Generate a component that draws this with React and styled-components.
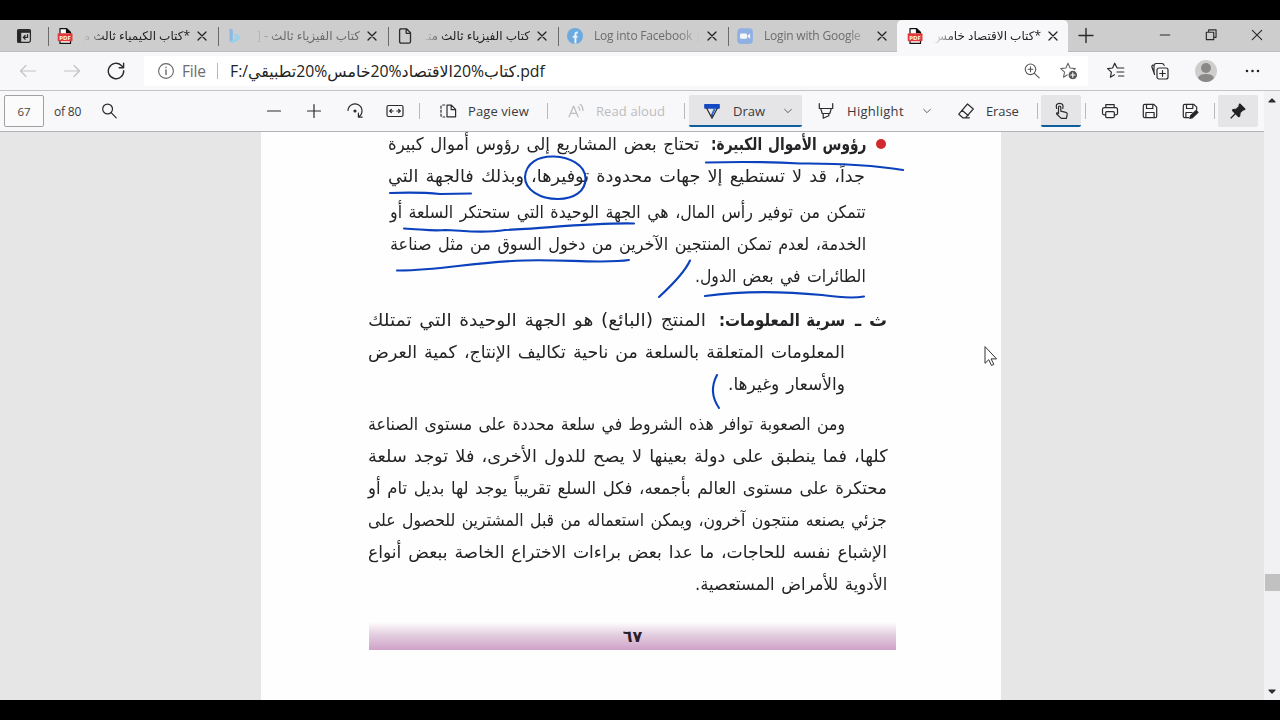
import { useLayoutEffect, useRef, useState } from 'react';
import styled, { createGlobalStyle, css } from 'styled-components';

const GlobalStyle = createGlobalStyle`
  * {
    box-sizing: border-box;
  }
  body {
    margin: 0;
    background: #000;
    overflow: hidden;
    font-family: "Open Sans", "Noto Sans", "DejaVu Sans", sans-serif;
  }
`;

const Screen = styled.div`
  display: flex;
  flex-direction: column;
  width: 1280px;
  height: 720px;
  padding: 20px 0;
  background: #000;
  overflow: hidden;
`;

/* ---------- tab strip ---------- */
const TabStrip = styled.header`
  display: flex;
  height: 32px;
  background: #cdcdcd;
  border-bottom: 1px solid #bdbdbd;
`;
const TabMenu = styled.div`
  display: flex;
  align-items: center;
  width: 47px;
  padding-left: 16px;
`;
const Tab = styled.div`
  display: flex;
  align-items: center;
  width: 170px;
  height: 32px;
  padding: 0 9px 0 8px;
  border-left: 1px solid transparent;
  ${(props) => !props.$active && css`
    background: linear-gradient(#6a6a6a, #6a6a6a) 0 7px / 1px 19px no-repeat;
  `}
  ${(props) => props.$active && css`
    width: 171px;
    background: #f8f8fa;
    border-radius: 5px 5px 0 0;
  `}
`;
const TabTitle = styled.span`
  flex: 1;
  height: 20px;
  margin: 0 6px 0 10px;
  overflow: hidden;
  white-space: nowrap;
  font-size: 12px;
  line-height: 20px;
  letter-spacing: ${(props) => (props.dir === 'rtl' ? 0 : '-0.2px')};
  color: ${(props) => (props.$dim ? '#6c6c6c' : '#222')};
  mask-image: linear-gradient(
    ${(props) => (props.dir === 'rtl' ? 'to left' : 'to right')},
    #000 calc(100% - 22px), transparent
  );
`;
const WindowButtons = styled.div`
  display: flex;
  flex: 1;
  align-items: center;
  padding: 0 14px 2px 8px;
`;

/* ---------- address bar ---------- */
const NavBar = styled.nav`
  display: flex;
  align-items: center;
  height: 39px;
  background: #f8f8fa;
  border-bottom: 1px solid #c3c3c5;
`;
const AddressBox = styled.div`
  display: flex;
  align-items: center;
  width: 944px;
  height: 30px;
  margin-left: 19px;
  padding: 0 10px 0 13px;
  background: #fff;
  font-size: 15.8px;
`;
const Scheme = styled.span`
  width: 35px;
  margin-left: 7px;
  color: #6d6d6d;
  font-size: 15.5px;
  letter-spacing: -0.2px;
`;
const Url = styled.span`
  flex: 1;
  padding-left: 12px;
  color: #222;
  white-space: nowrap;
`;
const Avatar = styled.svg`
  width: 22px;
  height: 22px;
  margin-left: 26px;
`;

/* ---------- pdf toolbar ---------- */
const Viewer = styled.section`
  display: flex;
  flex: 1;
  min-height: 0;
`;
const ViewerMain = styled.div`
  display: flex;
  flex-direction: column;
  width: 1264px;
`;
const Toolbar = styled.div`
  display: flex;
  align-items: center;
  height: 41px;
  padding-left: 4px;
  background: #f8f8fa;
  border-bottom: 1px solid #b4b4b7;
  font-size: 13px;
  color: #333;
`;
const PageInput = styled.div`
  width: 40px;
  height: 32px;
  border: 1px solid #a0a0a3;
  border-radius: 2px;
  background: #fbfbfc;
  text-align: center;
  font-size: 11.5px;
  line-height: 31px;
  color: #444;
`;
const ToolLabel = styled.span`
  width: ${(props) => props.$w}px;
  margin-left: ${(props) => props.$ml}px;
  white-space: nowrap;
  font-size: ${(props) => props.$size || 13}px;
  letter-spacing: ${(props) => props.$ls || 0}px;
  color: ${(props) => (props.$off ? '#bcbcbe' : '#3a3a3a')};
`;
const Divider = styled.i`
  width: 1px;
  height: ${(props) => props.$h || 16}px;
  margin-left: ${(props) => props.$ml || 0}px;
  background: #b9b9bc;
`;
const ToolButton = styled.div`
  display: flex;
  align-items: center;
  width: ${(props) => props.$w}px;
  height: 32px;
  margin-left: ${(props) => props.$ml}px;
  padding-top: 2px;
  padding-left: ${(props) => props.$pl}px;
  background: #e5e5e7;
  border-bottom: 2px solid ${(props) => (props.$selected ? '#0c5e9c' : 'transparent')};
  border-radius: 2px;
`;
const Svg = styled.svg`
  flex: none;
  display: block;
  margin-left: ${(props) => props.$ml || 0}px;
  fill: none;
  stroke: ${(props) => props.$c || '#2b2b2b'};
  stroke-width: ${(props) => props.$sw || 1.2};
  stroke-linecap: round;
  stroke-linejoin: round;
`;

/* ---------- document ---------- */
const Canvas = styled.main`
  display: flex;
  flex: 1;
  min-height: 0;
  padding-left: 261px;
  background: #e6e6e6;
  overflow: hidden;
`;
const Page = styled.article`
  position: relative;
  width: 740px;
  padding-top: 0;
  background: #fefefe;
`;
const Line = styled.div`
  display: flex;
  direction: rtl;
  height: ${(props) => props.$h || 32}px;
  padding-right: ${(props) => props.$right}px;
  align-items: flex-end;
  margin-top: ${(props) => props.$mt || 0}px;
`;
const Bullet = styled.i`
  width: 10px;
  height: 10px;
  margin: 0 0 12px 10px;
  border-radius: 50%;
  background: #d22a2c;
`;
const Slot = styled.div`
  width: ${(props) => props.$w}px;
  margin-left: ${(props) => props.$gap || 0}px;
  height: 32px;
`;
const Words = styled.span`
  display: inline-block;
  white-space: nowrap;
  transform-origin: right center;
  font-family: "DejaVu Sans", sans-serif;
  font-size: 17.5px;
  line-height: 31px;
  word-spacing: 1.5px;
  font-weight: ${(props) => (props.$bold ? 700 : 400)};
  color: #242426;
`;
const PageFooter = styled.footer`
  width: 527px;
  height: 28px;
  margin: 21px 0 0 108px;
  background: linear-gradient(#fefefe, #e4cfe0 45%, #cfa2c8);
  text-align: center;
  font: bold 16px/30px "DejaVu Sans", sans-serif;
  letter-spacing: 1px;
  color: #2b1f2b;
`;
const Ink = styled.svg`
  position: absolute;
  left: 0;
  top: 0;
  fill: none;
  stroke: #0b41bd;
  stroke-width: 2.1;
  stroke-linecap: round;
`;

const ScrollBar = styled.aside`
  display: flex;
  flex-direction: column;
  align-items: center;
  width: 16px;
  background: #f1f0f3;
`;
const Thumb = styled.div`
  flex: none;
  width: 15px;
  height: 17px;
  margin: 465px 0 91px;
  background: #c1c1c1;
`;

// printed words are set tight: stretch or squeeze each run to its measure
const Run = ({ w, gap, bold, children }) => {
    const ref = useRef(null);
    const [scale, setScale] = useState(1);
    useLayoutEffect(() => {
        setScale(w / ref.current.offsetWidth);
    }, [w]);
    return (
        <Slot $w={w} $gap={gap}>
            <Words ref={ref} $bold={bold} style={{ transform: `scaleX(${scale})` }}>{children}</Words>
        </Slot>
    );
};

const Icon = ({ size = 18, ml, c, sw, children }) => (
    <Svg width={size} height={size} viewBox="0 0 18 18" $ml={ml} $c={c} $sw={sw}>{children}</Svg>
);

const PdfIcon = () => (
    <Icon>
        <path d="M4 7V1.6h6.5L14.5 5.5V16.4H4V14" fill="#fff" stroke="#111" />
        <path d="M10.5 1.6v4h4z" fill="#111" stroke="#111" />
        <rect x="1.7" y="6.2" width="14.8" height="8" rx="1" fill="#e03a3c" stroke="none" />
        <text x="9.1" y="12.5" fontSize="6" fontWeight="700" textAnchor="middle" fill="#fff" stroke="none">PDF</text>
    </Icon>
);
const BingIcon = () => (
    <Icon>
        <path d="M3.6 1.5 6.8 2.6v11L3.6 15z" fill="#8bb9e3" stroke="none" />
        <path d="M7.8 6l6 2.7v3.6L6.8 16.3 3.6 14.8l5.8-3.4z" fill="#9bd0ea" stroke="none" />
    </Icon>
);
const FileIcon = () => (
    <Icon sw={1.3}>
        <path d="M4.2 1.8h6.3l4 4v8.8q0 1.6-1.6 1.6H5.2q-1.6 0-1.6-1.6V3.4q0-1.6 1.6-1.6M10.2 2v4.3h4.2" />
    </Icon>
);
const FacebookIcon = () => (
    <Icon>
        <circle cx="9" cy="9" r="8" fill="#6ba9df" stroke="none" />
        <path d="M9.4 16.5V7.4q0-2.2 2.5-1.9M6.7 9.8h4.8" stroke="#e8f1f8" strokeWidth="2" strokeLinecap="butt" />
    </Icon>
);
const ZoomIcon = () => (
    <Icon>
        <rect x="1.3" y="1.3" width="15.6" height="15.6" rx="4" fill="#8fb0e2" stroke="none" />
        <rect x="4" y="6.4" width="7" height="5.4" rx="1.3" fill="#f3f6fb" stroke="none" />
        <path d="M11.7 8.3l2.4-1.6v4.8l-2.4-1.6z" fill="#f3f6fb" stroke="none" />
    </Icon>
);
const CloseIcon = () => (
    <Icon size={12} c="#222" sw={1.9}>
        <path d="M3 3l12 12M15 3L3 15" />
    </Icon>
);
const Chevron = ({ ml }) => (
    <Icon size={10} ml={ml} c="#555" sw={1.7}><path d="M3 6l6 6 6-6" /></Icon>
);
const StarPath = 'M8 1.2l2.1 4.8 5.2.6-3.9 3.5 1.1 5.1L8 12.6l-4.5 2.6 1.1-5.1L.7 6.600 5.900 6z';

const tabs = [
    { icon: <PdfIcon />, title: '*كتاب الكيمياء ثالث م', rtl: true },
    { icon: <BingIcon />, title: 'كتاب الفيزياء ثالث - [', rtl: true, dim: true },
    { icon: <FileIcon />, title: 'كتاب الفيزياء ثالث متـ', rtl: true },
    { icon: <FacebookIcon />, title: 'Log into Facebook |', dim: true },
    { icon: <ZoomIcon />, title: 'Login with Google', dim: true },
    { icon: <PdfIcon />, title: '*كتاب الاقتصاد خامس', rtl: true, active: true },
];

const Tabs = () => (
    <TabStrip>
        <TabMenu>
            <Icon size={16} sw={1.4}>
                <rect x="1.8" y="1.8" width="14.4" height="14.4" rx="2" />
                <path d="M2 2.5h14v2.2H5.2V16H2z" fill="#222" />
                <path d="M13 7.5v3H8.5M10.3 8.4L8.2 10.5l2.1 2.1" />
            </Icon>
        </TabMenu>
        {tabs.map((tab, i) => (
            <Tab key={i} $active={tab.active}>
                {tab.icon}
                <TabTitle dir={tab.rtl ? 'rtl' : 'ltr'} $dim={tab.dim}>{tab.title}</TabTitle>
                <CloseIcon />
            </Tab>
        ))}
        <WindowButtons>
            <Icon ml={1} sw={1.4}><path d="M2 9.5h14M9 2.5v14" /></Icon>
            <Icon size={14} ml={63} sw={1.5}><path d="M3 9h12" /></Icon>
            <Icon size={14} ml={32} sw={1.5}><path d="M3 5.5h9.5V15H3zM6 5V2.5h9.5V12H13" /></Icon>
            <Icon size={14} ml={32} sw={1.5}><path d="M3 3l12 12M15 3L3 15" /></Icon>
        </WindowButtons>
    </TabStrip>
);

const Navigation = () => (
    <NavBar>
        <Icon ml={19} c="#c2c2c5"><path d="M1.500 9h15M7 3.500L1.500 9 7 14.500" /></Icon>
        <Icon ml={26} c="#c2c2c5"><path d="M1.500 9h15M11 3.500L16.500 9 11 14.500" /></Icon>
        <Icon ml={26} sw={1.400}><path d="M16.700 8.800A7.700 7.700 0 1 1 14.300 3.400L16.200 5.500M16.600 1.300v4.400h-4.400" /></Icon>
        <AddressBox>
            <Icon c="#666" sw={1.1}>
                <circle cx="9" cy="9" r="7.4" />
                <path d="M9 8v4.6M9 5.3v.3" strokeWidth="1.4" />
            </Icon>
            <Scheme>File</Scheme>
            <Divider $ml={0} />
            <Url>F:/كتاب%20الاقتصاد%20خامس%20تطبيقي.pdf</Url>
            <Icon c="#555" sw={1.1}>
                <circle cx="7.5" cy="7.3" r="5.3" />
                <path d="M11.4 11.3l4.8 4.5M7.5 4.9v4.8M5.1 7.3h4.8" />
            </Icon>
            <Icon ml={19} c="#666" sw={1.1}>
                <path d={StarPath} />
                <circle cx="12.800" cy="13" r="4.8" fill="#555" stroke="#fff" />
                <path d="M12.800 10.800v4.400M10.600 13h4.400" stroke="#fff" />
            </Icon>
        </AddressBox>
        <Icon ml={19}>
            <path d="M9.800 5.600L7.700 1.200 5.600 6l-5 .6 3.800 3.500-1 5.100L7.500 12.800M10.500 6h6.300M10 10h6.800M11.500 14h5.300" />
        </Icon>
        <Icon ml={26}>
            <rect x="6" y="6" width="11" height="11" rx="2" />
            <path d="M11.500 8.700v5.600M8.700 11.500h5.600M3.600 12.500L1 5.200Q.5 3.700 1.900 3.100M3.600 12.500Q3 11 3 9V3.800Q3 1.500 5.200 1.500h5.600q2 0 2.400 2" />
        </Icon>
        <Avatar viewBox="0 0 22 22">
            <circle cx="11" cy="11" r="11" fill="#d0cecc" />
            <circle cx="11" cy="8" r="5" fill="#8b8988" />
            <path d="M3 18q1-4 8-4t8 4q-3 4-8 4t-8-4z" fill="#8b8988" />
        </Avatar>
        <Icon ml={26} c="#222">
            <path d="M4 9h.01M9.5 9h.01M15 9h.01" strokeWidth="2.6" />
        </Icon>
    </NavBar>
);

const Tools = () => (
    <Toolbar>
        <PageInput>67</PageInput>
        <ToolLabel $ml={10} $w={38} $size={12} $ls={-0.2}>of 80</ToolLabel>
        <Icon ml={8}><circle cx="7.6" cy="7" r="4.9" /><path d="M11.2 10.6l5 5.2" /></Icon>
        <Icon ml={147}><path d="M2.5 9h13" /></Icon>
        <Icon ml={22}><path d="M2.5 9h13M9 2.5v13" /></Icon>
        <Icon ml={23}>
            <path d="M2 8.500A7 7 0 1 1 13 14.600M12.400 11.200v3.900h3.800" />
            <circle cx="9" cy="9" r="1" fill="#222" />
        </Icon>
        <Icon ml={22}>
            <rect x="1" y="3.5" width="16" height="11" rx="1.5" />
            <path d="M3.8 9h3.4M10.8 9h3.4M5.4 7.3L3.7 9l1.7 1.7M12.6 7.3L14.3 9l-1.7 1.7" />
        </Icon>
        <Divider $ml={15} />
        <Icon ml={19}>
            <path d="M8 3.2h4.4l4.2 4.2v7.4H8zM12.2 3.4v4.2h4.2" />
            <path d="M5.7 3H3.4Q2 3 2 4.5v9Q2 15 3.4 15h2.3" strokeDasharray="2 2" />
        </Icon>
        <ToolLabel $ml={11} $w={79} $ls={0.1}>Page view</ToolLabel>
        <Divider />
        <Icon ml={19} c="#bcbcbe">
            <path d="M2 15L6.6 4l4.6 11M3.6 11.3h6M11 4.8q1.8 1.3 1.8 3.7M13.2 2.3q2.8 2.2 2.8 6.2" />
        </Icon>
        <ToolLabel $ml={11} $w={88} $ls={0.1} $off>Read aloud</ToolLabel>
        <Divider />
        <ToolButton $ml={4} $w={113} $pl={14} $selected>
            <Icon>
                <path d="M1.8 2.5h14.4v3.6H1.8z" fill="#1549c4" stroke="#1549c4" />
                <path d="M3.8 6.5L9 16.2l5.2-9.7M7.5 13.3l1.5 2.9 1.5-2.9z" />
                <path d="M11.6 7L9 12.6" stroke="#2a6bd0" strokeWidth="1.8" />
            </Icon>
            <ToolLabel $ml={12} $w={50}>Draw</ToolLabel>
            <Chevron ml={0} />
        </ToolButton>
        <Icon ml={15}>
            <path d="M2.3 1.500v5h13.400v-5M3.800 6.800l1.400 4.700h7.600l1.400-4.700M6.200 11.500v4.700l5.600-2.400v-2.300" />
        </Icon>
        <ToolLabel $ml={12} $w={75} $ls={0.3}>Highlight</ToolLabel>
        <Chevron ml={0} />
        <Icon ml={25}>
            <path d="M10.5 2l5.8 5L8.4 15.8H5.8L1.8 12.2zM5 8.2l6.2 5.3M8.4 15.8h4" />
        </Icon>
        <ToolLabel $ml={11} $w={51} $ls={-0.1}>Erase</ToolLabel>
        <Divider />
        <ToolButton $ml={3} $w={40} $pl={11} $selected>
            <Icon>
                <path d="M6.5 11V5.2q0-1.2 1.1-1.2t1.2 1.2v4l5 1.1q1.7.4 1.4 2.1l-.8 4H9.2L4.7 12q-.6-1 .4-1.2l1.4.8M4.6 6.5Q3.2 1.3 7.6 1.3t3.2 5.2" />
            </Icon>
        </ToolButton>
        <Divider $ml={4} />
        <Icon ml={15}>
            <path d="M4.8 5.5V2.6h8.4v2.900M4.500 12.800H3q-1.500 0-1.500-1.500V7.500Q1.500 5.600 3.400 5.600h11.200q1.900 0 1.900 1.900v3.800q0 1.500-1.500 1.500h-1.500" />
            <rect x="4.7" y="9.6" width="8.6" height="6" rx="1" />
        </Icon>
        <Icon ml={22}>
            <path d="M2.3 3.8q0-1.5 1.5-1.5h9l2.9 2.9v9q0 1.5-1.5 1.5H3.8q-1.500 0-1.500-1.500zM5.500 2.500v4h6.300v-4M4.900 15.500v-5h8.200v5" />
        </Icon>
        <Icon ml={22}>
            <path d="M7.6 15.7H3.8q-1.5 0-1.5-1.5V3.8q0-1.5 1.5-1.5h9l2.9 2.9v2.6M5.5 2.5v4h6.3v-4M4.9 15.5v-5h6.2" />
            <path d="M8.8 16.4l.8-2.8 5.5-5.2 1.9 1.9-5.4 5.3z" fill="#222" />
        </Icon>
        <Divider $ml={15} />
        <ToolButton $ml={3} $w={40} $pl={11}>
            <Icon>
                <path d="M10.8 2l5.2 5.1-1.3.8-1 .1-2.6 2.6-.5 3.6-1.1.4-5.9-6 .4-1.1 3.6-.5L10.2 4.4l-.1-1.3zM6 12L2 16" fill="#222" stroke="#222" />
            </Icon>
        </ToolButton>
    </Toolbar>
);

const Document = () => (
    <Page>
        <Line $h={29} $right={115}>
            <Bullet />
            <Run w={155} gap={12} bold>رؤوس الأموال الكبيرة:</Run>
            <Run w={311}>تحتاج بعض المشاريع إلى رؤوس أموال كبيرة</Run>
        </Line>
        <Line $right={136}><Run w={477}>جداً، قد لا تستطيع إلا جهات محدودة توفيرها، وبذلك فالجهة التي</Run></Line>
        <Line $right={135} $mt={4}><Run w={476}>تتمكن من توفير رأس المال، هي الجهة الوحيدة التي ستحتكر السلعة أو</Run></Line>
        <Line $right={135}><Run w={476}>الخدمة، لعدم تمكن المنتجين الآخرين من دخول السوق من مثل صناعة</Run></Line>
        <Line $right={135}><Run w={171}>الطائرات في بعض الدول.</Run></Line>
        <Line $right={114} $mt={12}>
            <Run w={32} gap={10} bold>ث ـ</Run>
            <Run w={126} gap={13} bold>سرية المعلومات:</Run>
            <Run w={338}>المنتج (البائع) هو الجهة الوحيدة التي تمتلك</Run>
        </Line>
        <Line $right={156}><Run w={477}>المعلومات المتعلقة بالسلعة من ناحية تكاليف الإنتاج، كمية العرض</Run></Line>
        <Line $right={156}><Run w={117}>والأسعار وغيرها.</Run></Line>
        <Line $right={156} $mt={8}><Run w={477}>ومن الصعوبة توافر هذه الشروط في سلعة محددة على مستوى الصناعة</Run></Line>
        <Line $right={113}><Run w={520}>كلها، فما ينطبق على دولة بعينها لا يصح للدول الأخرى، فلا توجد سلعة</Run></Line>
        <Line $right={114}><Run w={519}>محتكرة على مستوى العالم بأجمعه، فكل السلع تقريباً يوجد لها بديل تام أو</Run></Line>
        <Line $right={114}><Run w={519}>جزئي يصنعه منتجون آخرون، ويمكن استعماله من قبل المشترين للحصول على</Run></Line>
        <Line $right={114}><Run w={519}>الإشباع نفسه للحاجات، ما عدا بعض براءات الاختراع الخاصة ببعض أنواع</Run></Line>
        <Line $right={114}><Run w={192}>الأدوية للأمراض المستعصية.</Run></Line>
        <PageFooter>٦٧</PageFooter>
        <Ink width="740" height="568" viewBox="261 132 740 568">
            <path d="M706 162.5Q755 161 800 163.5Q860 163 903 170" />
            <path d="M554 156.5C538 156 526 163 525 177C525 190 540 199 558 199C574 199 586 191 585.5 178C585 165 570 157 554 156.5" />
            <path d="M390 193Q420 192 440 194L471 193.5" />
            <path d="M404 228.5C420 229 432 231.5 445 230C460 230 480 234 505 230C540 229 590 222.5 634 223.5" />
            <path d="M397 270.5C440 271 470 262 525 260.5C560 259 605 264 629 260" />
            <path d="M690 260.5Q684 274 659 297" />
            <path d="M705 296C740 291 780 291 822 295Q850 299 864 296.5" />
            <path d="M717 375Q708 392 719 408" />
            <path d="M985 347v16.3l3.8-3.6 2.7 5.8 2.3-1.1-2.7-5.5h5.1z" fill="#fff" stroke="#333" strokeWidth="1" />
        </Ink>
    </Page>
);

const App = () => {
    return (
        <>
            <GlobalStyle />
            <Screen>
                <Tabs />
                <Navigation />
                <Viewer>
                    <ViewerMain>
                        <Tools />
                        <Canvas><Document /></Canvas>
                    </ViewerMain>
                    <ScrollBar>
                        <Svg width="8" height="18" viewBox="0 0 8 18"><path d="M1 11l3-3 3 3z" fill="#333" /></Svg>
                        <Thumb />
                        <Svg width="8" height="18" viewBox="0 0 8 18"><path d="M1 8l3 3 3-3z" fill="#333" /></Svg>
                    </ScrollBar>
                </Viewer>
            </Screen>
        </>
    );
};

export default App;
